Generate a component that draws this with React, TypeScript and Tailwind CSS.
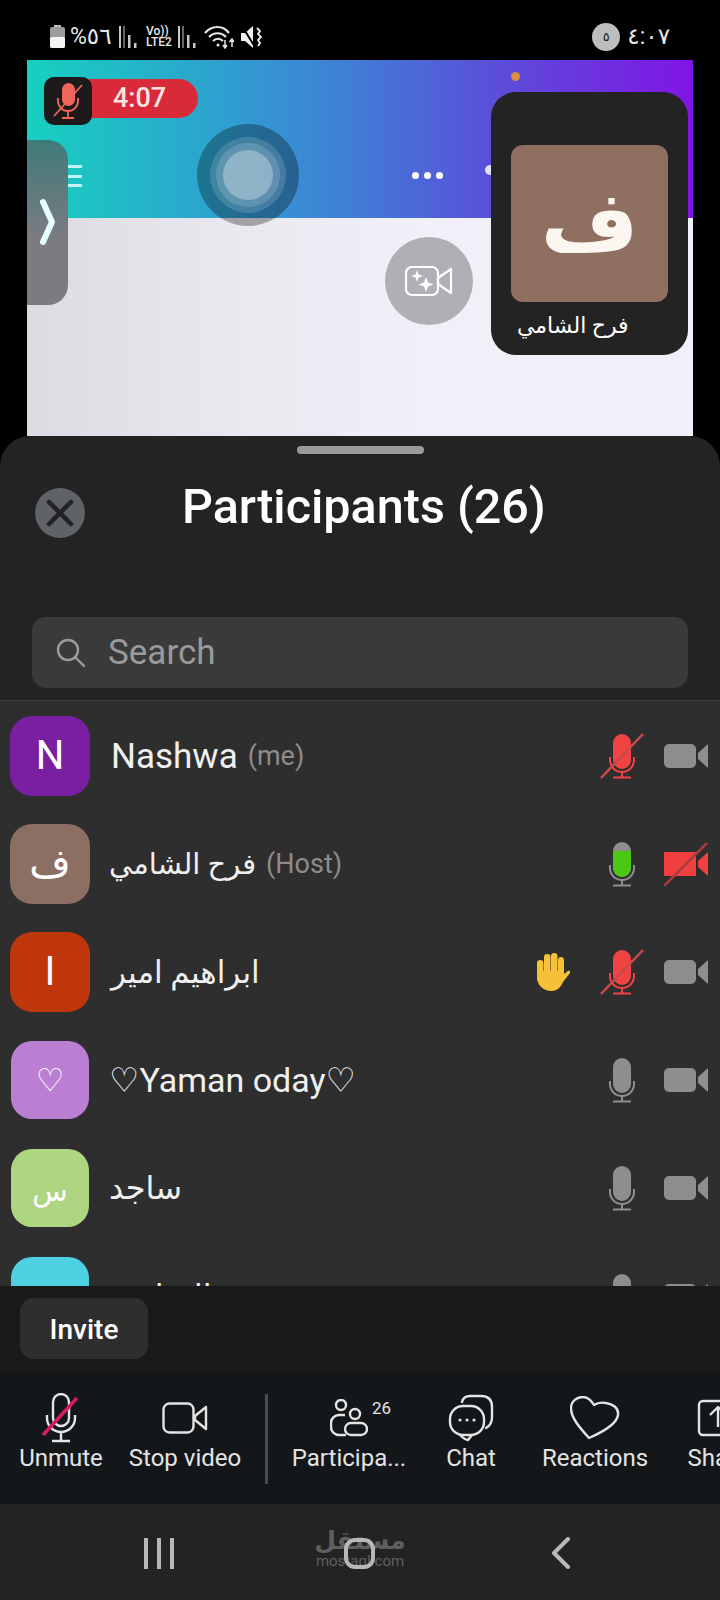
const rows = [
  { name: 'Nashwa', nameSize: 'text-[35px]', tag: '(me)', letter: 'N', letterSize: 'text-[40px]', size: 'w-[80px] h-[80px] ml-[10px] mr-[21px] rounded-[22px]', color: 'bg-[#7b1fa2]', mic: 'muted', cam: 'on' },
  { name: 'فرح الشامي', nameSize: 'text-[29px]', tag: '(Host)', letter: 'ف', letterSize: 'text-[40px]', size: 'w-[80px] h-[80px] ml-[10px] mr-[19px] rounded-[22px]', color: 'bg-[#8d6e63]', mic: 'talking', cam: 'off' },
  { name: 'ابراهيم امير', nameSize: 'text-[31px]', letter: 'I', letterSize: 'text-[40px]', size: 'w-[80px] h-[80px] ml-[10px] mr-[21px] rounded-[22px]', color: 'bg-[#bf360c]', mic: 'muted', cam: 'on', hand: true },
  { name: '♡Yaman oday♡', nameSize: 'text-[34px]', letter: '♡', letterSize: 'text-[32px]', size: 'w-[78px] h-[78px] ml-[11px] mr-[20px] rounded-[21px]', color: 'bg-[#ba7fd3]', mic: 'idle', cam: 'on' },
  { name: 'ساجد', nameSize: 'text-[32px]', letter: 'س', letterSize: 'text-[29px] pt-[8px]', size: 'w-[78px] h-[78px] ml-[11px] mr-[20px] rounded-[21px]', color: 'bg-[#aed581]', mic: 'idle', cam: 'on' },
  { name: 'الساعي', nameSize: 'text-[32px]', letter: '', letterSize: 'text-[32px]', size: 'w-[78px] h-[78px] ml-[11px] mr-[20px] rounded-[21px]', color: 'bg-[#4dd0e1]', mic: 'idle', cam: 'on' },
];

function Mic({ state }: { state: string }) {
  const tone = state === 'muted' ? '#f04444' : '#8e8e8e';
  return (
    <svg width="44" height="46" viewBox="0 0 44 46" fill="none">
      <rect x="13" y="1" width="18" height="35" rx="9" fill={tone} />
      {state === 'talking' && <path d="M13 10h18v17a9 9 0 0 1-18 0z" fill="#4cc814" />}
      <path d="M10 24v3a12 12 0 0 0 24 0v-3M22 39v5M13 44.500h18" stroke={tone} strokeWidth="2" />
      {state === 'muted' && <path d="M1 45 43 1" stroke="#c94a4a" strokeWidth="2.500" />}
    </svg>
  );
}

function Cam({ off }: { off?: boolean }) {
  const tone = off ? '#f04040' : '#8e8e8e';
  return (
    <svg width="44" height="44" viewBox="0 0 44 44" fill="none">
      <rect x="0" y="10" width="32" height="24" rx={off ? 1 : 5} fill={tone} />
      <path d="M34 19 44 10v24l-10-9z" fill={tone} />
      {off && <path d="M0 44 43 1" stroke="#a83c3c" strokeWidth="2.500" />}
    </svg>
  );
}

function Hand() {
  return (
    <svg width="34" height="38" viewBox="0 0 34 38" fill="#f6c136">
      <rect x="1" y="7" width="6.500" height="20" rx="3.200" />
      <rect x="8" y="1" width="6.500" height="24" rx="3.200" />
      <rect x="15" y="0" width="6.500" height="24" rx="3.200" />
      <rect x="22" y="4" width="6" height="22" rx="3" />
      <path d="M1 18h27v3l4-3c2-1 3 1 2 2l-7 9c-2 5-6 9-11 9C7 38 1 32 1 24z" />
    </svg>
  );
}

function Row({ row }: { row: (typeof rows)[number] }) {
  return (
    <div className="flex h-[108px] shrink-0 items-center pr-[12px]">
      <div className={`${row.size} ${row.color} ${row.letterSize} flex shrink-0 items-center justify-center text-white`}>
        {row.letter}
      </div>
      <div className="flex min-w-0 flex-1 items-center gap-[10px]">
        <span className={`${row.nameSize} leading-none whitespace-nowrap text-[#f0f0f0]`}>{row.name}</span>
        {row.tag && <span className="text-[27px] leading-none text-[#8c8c8c]">{row.tag}</span>}
      </div>
      {row.hand && (
        <div className="mr-[30px]">
          <Hand />
        </div>
      )}
      <div className="mr-[20px]">
        <Mic state={row.mic} />
      </div>
      <Cam off={row.cam === 'off'} />
    </div>
  );
}

function ToolItem({ width, label, badge, children }: { width: string; label: string; badge?: string; children: React.ReactNode }) {
  return (
    <div className={`${width} relative flex shrink-0 flex-col items-center`}>
      <div className="flex h-[54px] items-center justify-center">{children}</div>
      <span className="mt-[-1px] text-[24px] leading-[28px] whitespace-nowrap text-[#e4e4e4]">{label}</span>
      {badge && <span className="absolute top-[9px] left-[104px] text-[17px] leading-none text-[#e4e4e4]">{badge}</span>}
    </div>
  );
}

function SignalBars() {
  return (
    <svg width="20" height="24" viewBox="0 0 20 24" fill="#c8c8c8">
      <rect x="0" y="1" width="2" height="22" />
      <rect x="4" y="1" width="2" height="22" opacity="0.500" />
      <rect x="9" y="10" width="2.500" height="13" />
      <rect x="15" y="18" width="2.500" height="5" />
    </svg>
  );
}

export default function App() {
  return (
    <div className="flex h-[1600px] w-[720px] flex-col overflow-hidden bg-black font-['Roboto','DejaVu_Sans',sans-serif]">
      {/* status bar */}
      <div className="relative flex h-[60px] shrink-0 items-center pt-[13px] pr-[50px] pl-[50px] text-[#e8e8e8]">
        <div className="flex items-center">
          <svg width="15" height="23" viewBox="0 0 15 23">
            <rect x="4" y="0" width="7" height="3" fill="#bdbdbd" />
            <rect x="0" y="2" width="15" height="21" rx="2" fill="#9c9c9c" />
            <rect x="0" y="12" width="15" height="11" rx="2" fill="#f4f4f4" />
          </svg>
          <span className="ml-[5px] w-[44px] text-[23px] leading-none whitespace-nowrap">%٥٦</span>
          <div className="ml-[5px]">
            <SignalBars />
          </div>
          <div className="ml-[7px] flex flex-col text-[12px] leading-[11px] font-medium">
            <span>Vo))</span>
            <span>LTE2</span>
          </div>
          <div className="ml-[6px]">
            <SignalBars />
          </div>
          <svg className="ml-[6px]" width="30" height="24" viewBox="0 0 30 24" fill="none" stroke="#e8e8e8" strokeWidth="2.200">
            <path d="M1 8c7-8 18-8 24 0M5 12c5-5 12-5 17 0M9 16c3-3 7-3 10 0" />
            <circle cx="14" cy="20" r="1.500" fill="#e8e8e8" stroke="none" />
            <path d="M21 15v8M28 22v-8M25.500 17l2.500-3 2 3M19 20l2 3 2-3" strokeWidth="1.500" />
          </svg>
          <svg className="ml-[7px]" width="22" height="24" viewBox="0 0 22 24" fill="#f0f0f0">
            <path d="M0 8h4l8-7v22l-8-7H0z" />
            <path d="M1 1 14 22" stroke="#000" strokeWidth="2" />
            <path d="M16 3l3 3-2 3 3 3-3 3 2 3-2 3" fill="none" stroke="#f0f0f0" strokeWidth="1.800" />
          </svg>
        </div>
        <div className="ml-auto flex items-center">
          <span className="flex h-[28px] w-[28px] items-center justify-center rounded-full bg-[#bdbdbd] text-[13px] leading-none text-[#222]">٥</span>
          <span className="ml-[7px] text-[23px] leading-none">٤:٠٧</span>
        </div>
      </div>

      {/* shared meeting view */}
      <div className="relative mx-[27px] flex h-[376px] shrink-0 flex-col">
        <div className="h-[158px] bg-[linear-gradient(90deg,#17d0bf_0%,#2f9fd0_30%,#427bd6_50%,#5a4fd9_70%,#8015e4_100%)]" />
        <div className="flex-1 bg-[linear-gradient(90deg,#dcdbe2_0%,#e9e8ef_30%,#f1f0f9_60%)]" />

        <div className="absolute top-[105px] left-[41px] flex h-[22px] w-[14px] flex-col justify-between">
          <span className="h-[3px] bg-[#c4f4f6]" />
          <span className="h-[3px] bg-[#c4f4f6]" />
          <span className="h-[3px] bg-[#c4f4f6]" />
        </div>
        <div className="absolute top-[80px] left-0 flex h-[165px] w-[41px] items-center justify-center rounded-r-[20px] bg-[linear-gradient(180deg,#3d7b78,#7c7b82_60%)]">
          <svg width="18" height="50" viewBox="0 0 18 50" fill="none">
            <path d="M4 4 13 24 4 44" stroke="#e6ffff" strokeWidth="6" strokeLinecap="round" strokeLinejoin="round" />
          </svg>
        </div>

        <div className="absolute top-[64px] left-[170px] flex h-[102px] w-[102px] items-center justify-center rounded-full bg-black/30">
          <div className="flex h-[76px] w-[76px] items-center justify-center rounded-full bg-white/15">
            <div className="flex h-[64px] w-[64px] items-center justify-center rounded-full bg-white/15">
              <div className="h-[50px] w-[50px] rounded-full bg-white/30" />
            </div>
          </div>
        </div>

        <div className="absolute top-[19px] left-[60px] flex h-[39px] w-[111px] items-center justify-center rounded-r-full bg-[#d92a3a] pr-[6px] text-[27px] leading-none font-medium text-[#fbe3e3]">
          4:07
        </div>
        <div className="absolute top-[17px] left-[17px] flex h-[48px] w-[48px] items-center justify-center rounded-[10px] bg-[#1c1a1a]">
          <svg width="30" height="38" viewBox="0 0 30 38" fill="none">
            <rect x="9" y="1" width="13" height="23" rx="6.500" fill="#f2655a" />
            <path d="M5 16v3a10 10 0 0 0 20 0v-3M15 29v6M9 36h12" stroke="#f2655a" strokeWidth="1.800" />
            <path d="M1 34 29 3" stroke="#f2655a" strokeWidth="1.800" />
          </svg>
        </div>

        <span className="absolute top-[112px] left-[385px] h-[7px] w-[7px] rounded-full bg-white" />
        <span className="absolute top-[112px] left-[397px] h-[7px] w-[7px] rounded-full bg-white" />
        <span className="absolute top-[112px] left-[409px] h-[7px] w-[7px] rounded-full bg-white" />
        <span className="absolute top-[105px] left-[458px] h-[10px] w-[10px] rounded-full bg-[#dce4ff]" />
        <span className="absolute top-[12px] left-[484px] h-[9px] w-[9px] rounded-full bg-[#d9903f]" />

        <div className="absolute top-[177px] left-[358px] flex h-[88px] w-[88px] items-center justify-center rounded-full bg-[#b0afb5]">
          <svg width="48" height="32" viewBox="0 0 48 32" fill="none" stroke="#fff" strokeWidth="2.200" strokeLinejoin="round">
            <rect x="1" y="2" width="32" height="28" rx="6" />
            <path d="M33 13 46 4v24l-13-9z" />
            <path d="M12 5l1.500 4.500L18 11l-4.500 1.500L12 17l-1.500-4.500L6 11l4.500-1.500zM21 12l2 5.500 5.500 2-5.500 2-2 5.500-2-5.500-5.500-2 5.500-2z" fill="#fff" stroke="none" />
          </svg>
        </div>

        <div className="absolute top-[32px] left-[464px] flex h-[263px] w-[197px] flex-col rounded-[25px] bg-[#232323] px-[20px] pt-[53px]">
          <div className="flex h-[157px] w-[157px] items-center justify-center rounded-[12px] bg-[#8f6f60] pb-[2px] text-[84px] leading-none font-bold text-[#fbf6f0]">
            ف
          </div>
          <span className="mt-[10px] ml-[6px] text-[22px] leading-[28px] whitespace-nowrap text-white">فرح الشامي</span>
        </div>
      </div>

      {/* participants sheet */}
      <div className="flex h-[264px] shrink-0 flex-col rounded-t-[30px] bg-[#232323]">
        <div className="mx-auto mt-[10px] h-[8px] w-[127px] rounded-full bg-[#9a9a9a]" />
        <div className="mt-[34px] flex h-[50px] items-center">
          <div className="ml-[35px] flex h-[50px] w-[50px] items-center justify-center rounded-full bg-[#5f6267]">
            <svg width="28" height="28" viewBox="0 0 28 28" fill="none" stroke="#232323" strokeWidth="4.500" strokeLinecap="round">
              <path d="M3 3l22 22M25 3 3 25" />
            </svg>
          </div>
          <h1 className="ml-[97px] pb-[12px] text-[48.500px] leading-none font-medium whitespace-nowrap text-white">Participants (26)</h1>
        </div>
        <div className="mx-[32px] mt-[79px] flex h-[71px] items-center rounded-[14px] bg-[#3a3a3a] pl-[24px]">
          <svg width="30" height="30" viewBox="0 0 30 30" fill="none" stroke="#9c9c9c" strokeWidth="2.400" strokeLinecap="round">
            <circle cx="12" cy="12" r="10" />
            <path d="M19.500 19.500 28 28" />
          </svg>
          <span className="ml-[22px] text-[35px] leading-none text-[#9a9a9a]">Search</span>
        </div>
      </div>

      <div className="flex h-[586px] shrink-0 flex-col overflow-hidden border-t border-[#3e3e3e] bg-[#2e2e2e] pt-[1px]">
        {rows.map((row) => (
          <Row key={row.name} row={row} />
        ))}
      </div>

      <div className="flex h-[87px] shrink-0 bg-[#1a1a1a] pt-[12px] pl-[20px]">
        <div className="flex h-[61px] w-[128px] items-center justify-center rounded-[14px] bg-[#2e2e2e] pt-[3px] text-[28px] leading-none font-medium text-white">
          Invite
        </div>
      </div>

      {/* toolbar */}
      <div className="flex h-[131px] shrink-0 overflow-hidden bg-[#14171a] pt-[18px]">
        <ToolItem width="w-[122px]" label="Unmute">
          <svg width="40" height="50" viewBox="0 0 40 50" fill="none" stroke="#e4e4e4" strokeWidth="2.400">
            <rect x="12" y="1" width="16" height="32" rx="8" />
            <path d="M6 22v3a14 14 0 0 0 28 0v-3M20 39v9M11 48h18" />
            <path d="M2 42 36 5" stroke="#d81b60" strokeWidth="3.500" />
          </svg>
        </ToolItem>
        <ToolItem width="w-[126px]" label="Stop video">
          <svg width="46" height="32" viewBox="0 0 46 32" fill="none" stroke="#e4e4e4" strokeWidth="2.400" strokeLinejoin="round">
            <rect x="1.500" y="1.500" width="30" height="29" rx="6" />
            <path d="M44 5 33 14v4l11 9z" />
          </svg>
        </ToolItem>
        <div className="mt-[3px] ml-[17px] h-[90px] w-[3px] shrink-0 bg-[#484b50]" />
        <ToolItem width="w-[162px]" label="Participa..." badge="26">
          <svg width="38" height="38" viewBox="0 0 38 38" fill="none" stroke="#e4e4e4" strokeWidth="2.400">
            <circle cx="11" cy="6" r="5" />
            <circle cx="25" cy="15" r="5" />
            <path d="M15 16H9a8 8 0 0 0-8 8v4a8 8 0 0 0 8 8h7" />
            <rect x="15" y="24" width="22" height="12" rx="6" />
          </svg>
        </ToolItem>
        <ToolItem width="w-[82px]" label="Chat">
          <svg width="46" height="48" viewBox="0 0 46 48" fill="none" stroke="#e4e4e4" strokeWidth="2.400" strokeLinecap="round">
            <path d="M14 8c1-4 4-6 8-6h11c7 0 11 4 11 11v10c0 5-2 9-6 11" />
            <rect x="2" y="12" width="34" height="29" rx="13" />
            <path d="M12 41c2 2 5 5 8 5l4-5" />
            <circle cx="12" cy="26" r="1.600" fill="#e4e4e4" stroke="none" />
            <circle cx="19" cy="26" r="1.600" fill="#e4e4e4" stroke="none" />
            <circle cx="26" cy="26" r="1.600" fill="#e4e4e4" stroke="none" />
          </svg>
        </ToolItem>
        <ToolItem width="w-[166px]" label="Reactions">
          <svg width="50" height="44" viewBox="0 0 50 44" fill="none" stroke="#e4e4e4" strokeWidth="2.400" strokeLinejoin="round">
            <path d="M19 42C10 32 1 22 1 12 1 5 7 1 13 1c5 0 8 3 11 8 3-2 7-3 12-2 7 1 13 5 12 12-1 8-13 16-29 23z" />
          </svg>
        </ToolItem>
        <ToolItem width="w-[80px]" label="Share">
          <svg width="42" height="38" viewBox="0 0 42 38" fill="none" stroke="#e4e4e4" strokeWidth="2.400" strokeLinejoin="round">
            <rect x="2" y="2" width="38" height="34" rx="4" />
            <path d="M21 28V9M13 16l8-8 8 8" />
          </svg>
        </ToolItem>
      </div>

      {/* android nav */}
      <div className="relative grid h-[96px] shrink-0 grid-cols-[201px_201px_201px] bg-[#232323] pl-[58px]">
        <div className="absolute top-[24px] left-[316px] flex w-[88px] flex-col items-center text-[#5f5f5f]">
          <span className="text-[25px] leading-[26px] font-bold whitespace-nowrap">مستقل</span>
          <span className="text-[15px] leading-[14px]">mostaql.com</span>
        </div>
        <div className="relative flex items-center justify-center gap-[9px] pt-[2px]">
          <span className="h-[31px] w-[4px] bg-[#b8b8b8]" />
          <span className="h-[31px] w-[4px] bg-[#b8b8b8]" />
          <span className="h-[31px] w-[4px] bg-[#b8b8b8]" />
        </div>
        <div className="relative flex items-center justify-center pt-[2px]">
          <span className="h-[31px] w-[31px] rounded-[11px] border-[4px] border-[#b8b8b8]" />
        </div>
        <div className="relative flex items-center justify-center pt-[2px]">
          <svg width="20" height="32" viewBox="0 0 20 32" fill="none" stroke="#b8b8b8" strokeWidth="4" strokeLinecap="round" strokeLinejoin="round">
            <path d="M17 2 3 16l14 14" />
          </svg>
        </div>
      </div>
    </div>
  );
}
